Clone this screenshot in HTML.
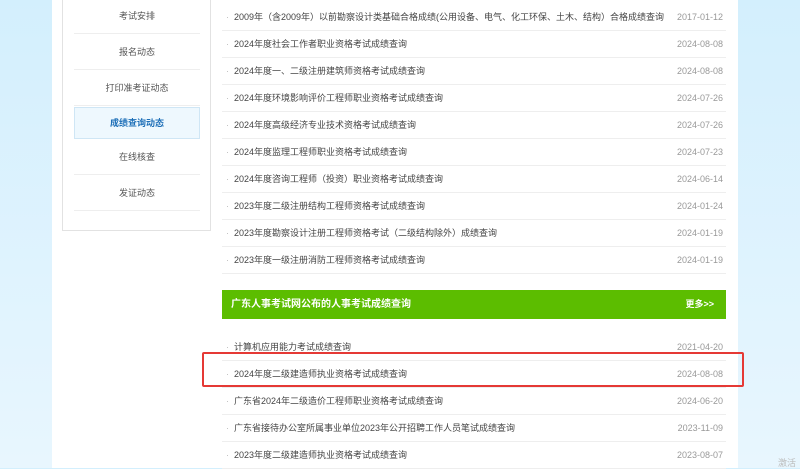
<!DOCTYPE html>
<html><head><meta charset="utf-8"><style>
*{margin:0;padding:0;box-sizing:border-box}
body{width:800px;height:468px;overflow:hidden;font-family:"Liberation Sans","Noto Sans CJK SC",sans-serif;font-size:9px;color:#444;position:relative;background:linear-gradient(180deg,#d3effd,#e8f6fe)}
.main{position:absolute;left:52px;top:0;width:686px;height:468px;background:#fff}
.side{position:absolute;left:62px;top:-2px;width:149px;height:233px;border:1px solid #e2e2e2;border-top:none;background:#fff}
.side div{position:absolute;left:11px;width:126px;height:36px;line-height:36px;text-align:center;border-bottom:1px solid #eee;font-size:9px;color:#555}
.side .act{background:#eef8fe;border:1px solid #cfe6f5;color:#1d6fb8;font-weight:bold}
.row{position:absolute;left:222px;width:504px;height:27px;border-bottom:1px solid #eee;line-height:27px}
.row .t{position:absolute;left:12px;top:0}
.row .b{position:absolute;left:4px;top:0;color:#bbb}
.row .d{position:absolute;right:3px;top:0;color:#999}
.green{position:absolute;left:222px;top:290px;width:504px;height:29px;background:#5cbd00;color:#fff;font-weight:bold;font-size:10px;line-height:29px}
.red{position:absolute;left:202px;top:352px;width:542px;height:35px;border:2px solid #e53935;border-radius:2px}
</style></head><body>
<div class="main"></div>
<div class="side">
<div style="top:0">考试安排</div>
<div style="top:36px">报名动态</div>
<div style="top:72px">打印准考证动态</div>
<div class="act" style="top:109px;height:32px;line-height:31px">成绩查询动态</div>
<div style="top:141px">在线核查</div>
<div style="top:177px">发证动态</div>
</div>
<div class="row" style="top:4px"><span class="b">·</span><span class="t">2009年（含2009年）以前勘察设计类基础合格成绩(公用设备、电气、化工环保、土木、结构）合格成绩查询</span><span class="d">2017-01-12</span></div>
<div class="row" style="top:31px"><span class="b">·</span><span class="t">2024年度社会工作者职业资格考试成绩查询</span><span class="d">2024-08-08</span></div>
<div class="row" style="top:58px"><span class="b">·</span><span class="t">2024年度一、二级注册建筑师资格考试成绩查询</span><span class="d">2024-08-08</span></div>
<div class="row" style="top:85px"><span class="b">·</span><span class="t">2024年度环境影响评价工程师职业资格考试成绩查询</span><span class="d">2024-07-26</span></div>
<div class="row" style="top:112px"><span class="b">·</span><span class="t">2024年度高级经济专业技术资格考试成绩查询</span><span class="d">2024-07-26</span></div>
<div class="row" style="top:139px"><span class="b">·</span><span class="t">2024年度监理工程师职业资格考试成绩查询</span><span class="d">2024-07-23</span></div>
<div class="row" style="top:166px"><span class="b">·</span><span class="t">2024年度咨询工程师（投资）职业资格考试成绩查询</span><span class="d">2024-06-14</span></div>
<div class="row" style="top:193px"><span class="b">·</span><span class="t">2023年度二级注册结构工程师资格考试成绩查询</span><span class="d">2024-01-24</span></div>
<div class="row" style="top:220px"><span class="b">·</span><span class="t">2023年度勘察设计注册工程师资格考试（二级结构除外）成绩查询</span><span class="d">2024-01-19</span></div>
<div class="row" style="top:247px"><span class="b">·</span><span class="t">2023年度一级注册消防工程师资格考试成绩查询</span><span class="d">2024-01-19</span></div>
<div class="green"><span style="position:absolute;left:9px">广东人事考试网公布的人事考试成绩查询</span><span style="position:absolute;right:12px;font-size:9px">更多&gt;&gt;</span></div>
<div class="row" style="top:334px"><span class="b">·</span><span class="t">计算机应用能力考试成绩查询</span><span class="d">2021-04-20</span></div>
<div class="row" style="top:361px"><span class="b">·</span><span class="t">2024年度二级建造师执业资格考试成绩查询</span><span class="d">2024-08-08</span></div>
<div class="row" style="top:388px"><span class="b">·</span><span class="t">广东省2024年二级造价工程师职业资格考试成绩查询</span><span class="d">2024-06-20</span></div>
<div class="row" style="top:415px"><span class="b">·</span><span class="t">广东省接待办公室所属事业单位2023年公开招聘工作人员笔试成绩查询</span><span class="d">2023-11-09</span></div>
<div class="row" style="top:442px"><span class="b">·</span><span class="t">2023年度二级建造师执业资格考试成绩查询</span><span class="d">2023-08-07</span></div>
<div class="red"></div>
<div style="position:absolute;left:778px;top:456px;color:#bbb;font-size:9px">激活</div>
</body></html>
